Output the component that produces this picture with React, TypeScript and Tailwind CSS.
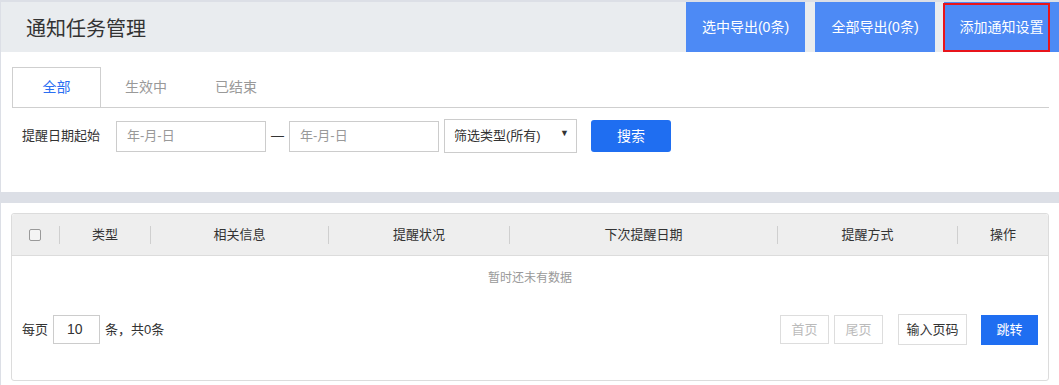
import React from 'react';

const columns = [
  { label: '类型', w: 'w-[91px]' },
  { label: '相关信息', w: 'w-[178px]' },
  { label: '提醒状况', w: 'w-[181px]' },
  { label: '下次提醒日期', w: 'w-[268px]' },
  { label: '提醒方式', w: 'w-[180px]' },
  { label: '操作', w: 'flex-1' },
];

const tabs = ['全部', '生效中', '已结束'];

export default function App() {
  return (
    <div className="w-[1059px] h-[385px] overflow-hidden bg-[#dcdfe6] pt-[2px] pl-px font-['Liberation_Sans','Noto_Sans_CJK_SC',sans-serif] text-[#333]">
      {/* Header */}
      <div className="flex h-[50px] bg-[#e9ecef]">
        <div className="pl-[25px] pt-[4px] flex items-center text-[20px] text-[#333]">通知任务管理</div>
        <div className="ml-auto flex h-full">
          <button className="w-[119px] h-full bg-[#4d8af5] text-white text-[14px]">选中导出(0条)</button>
          <button className="ml-[10px] w-[120px] h-full bg-[#4d8af5] text-white text-[14px]">全部导出(0条)</button>
          <button className="relative ml-[9px] w-[115px] h-full bg-[#4d8af5] text-white text-[14px]">
            添加通知设置
            <span className="absolute left-[-1px] top-px w-[107px] h-[49px] border-2 border-[#e8141b]" />
          </button>
        </div>
      </div>

      {/* Filter panel */}
      <div className="h-[140px] bg-white pt-[15px]">
        <div className="ml-[11px] mr-[10px] flex border-b border-[#cfcfcf]">
          {tabs.map((t, i) => (
            <div
              key={t}
              className={
                i === 0
                  ? 'w-[89px] h-[40px] -mb-px flex items-center justify-center border border-b-0 border-[#cfcfcf] bg-white text-[14px] text-[#2a6ff2]'
                  : 'w-[90px] h-[40px] flex items-center justify-center text-[14px] text-[#999]'
              }
            >
              {t}
            </div>
          ))}
        </div>
        <div className="flex items-center pl-[21px] mt-[11px] h-[34px]">
          <span className="w-[84px] text-[13px] text-[#333]">提醒日期起始</span>
          <div className="ml-[10px] w-[150px] h-[31px] border border-[#ccc] flex items-center pl-[10px] text-[13px] text-[#999]">年-月-日</div>
          <span className="mx-[5px] text-[13px] text-[#333]">—</span>
          <div className="w-[150px] h-[31px] border border-[#ccc] flex items-center pl-[10px] text-[13px] text-[#999]">年-月-日</div>
          <div className="ml-[5px] w-[133px] h-[34px] border border-[#ccc] flex items-center pl-[9px] pr-[7px] text-[13px] text-[#333]">
            <span>筛选类型(所有)</span>
            <span className="ml-auto -mt-[4px] text-[9px] text-[#333]">▼</span>
          </div>
          <button className="ml-[14px] w-[80px] h-[32px] rounded-[3px] bg-[#1f6ef1] text-white text-[14px]">搜索</button>
        </div>
      </div>

      {/* Table panel */}
      <div className="mt-[11px] h-[182px] bg-white pt-[10px] pl-[10px] pr-[10px]">
        <div className="h-[168px] border border-[#dcdcdc] rounded-[3px] flex flex-col">
          <div className="h-[42px] bg-[#eeeeee] border-b border-[#dcdcdc] flex items-center rounded-t-[3px]">
            <div className="w-[47px] flex justify-center">
              <span className="w-[12px] h-[12px] rounded-[2px] border border-[#999] bg-[#f4f4f4] ml-[-1px]" />
            </div>
            {columns.map((c) => (
              <div key={c.label} className={`${c.w} h-[18px] flex items-center justify-center border-l border-[#cfcfcf] text-[13px] text-[#333]`}>
                {c.label}
              </div>
            ))}
          </div>
          <div className="h-[44px] flex items-center justify-center text-[12px] text-[#999]">暂时还未有数据</div>
          <div className="flex items-center pl-[10px] pr-[10px] mt-[14px] text-[13px]">
            <span>每页</span>
            <div className="ml-[5px] w-[47px] h-[29px] border border-[#ccc] flex items-center pl-[13px] text-[14px] text-[#333]">10</div>
            <span className="ml-[5px]">条，共0条</span>
            <div className="ml-auto flex items-center">
              <div className="w-[49px] h-[29px] border border-[#ddd] flex items-center justify-center text-[13px] text-[#bbb]">首页</div>
              <div className="ml-[5px] w-[49px] h-[29px] border border-[#ddd] flex items-center justify-center text-[13px] text-[#bbb]">尾页</div>
              <div className="ml-[15px] w-[69px] h-[31px] border border-[#ddd] flex items-center justify-center text-[13px] text-[#333]">输入页码</div>
              <button className="ml-[14px] w-[57px] h-[30px] bg-[#1f6ef1] text-white text-[13px]">跳转</button>
            </div>
          </div>
        </div>
      </div>
    </div>
  );
}
